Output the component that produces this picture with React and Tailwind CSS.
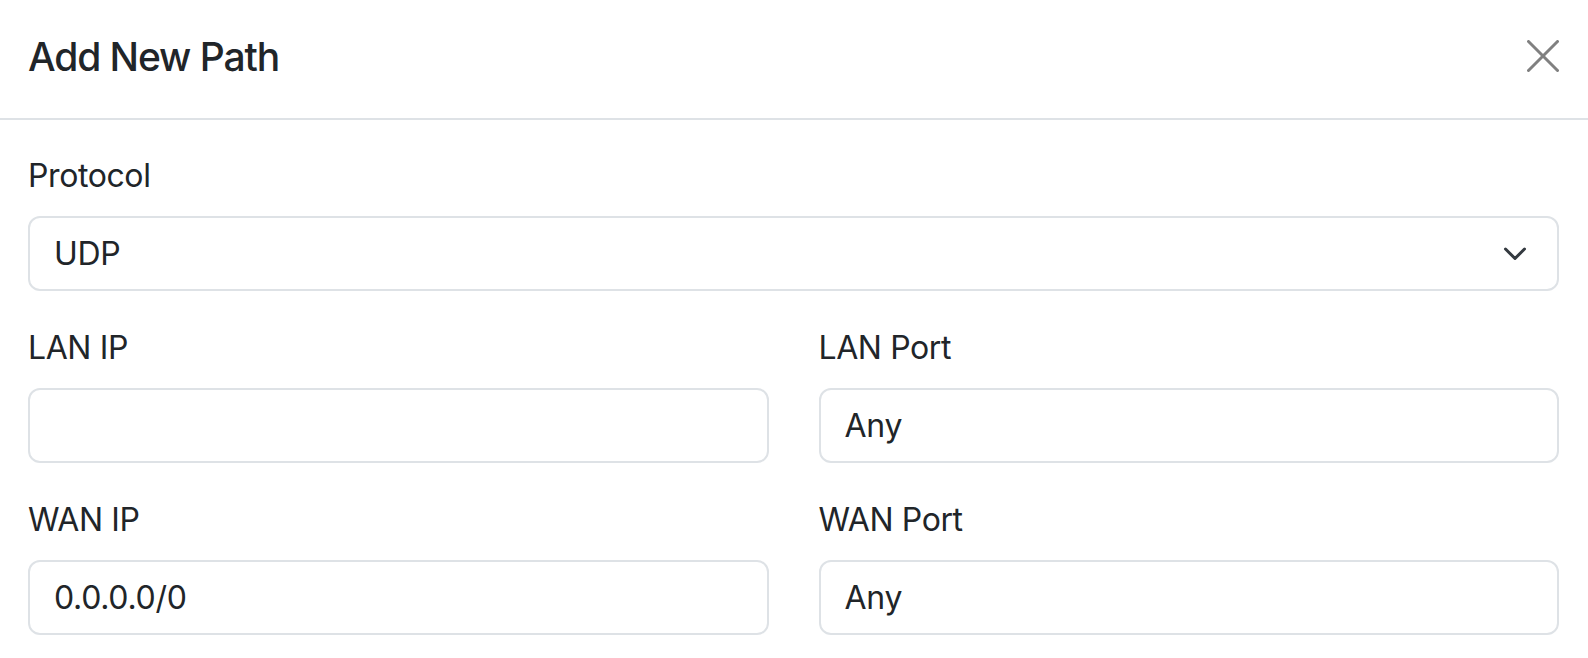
import React from "react";

function Field({ label, value, select }) {
  return (
    <div className="flex flex-col">
      <label className="h-[48px] leading-[48px] mb-[16px] text-[32px] tracking-[-0.4px] text-[#212529]">{label}</label>
      <div className="h-[75px] border-2 border-[#dee2e6] rounded-[12px] pl-[24px] pr-[30px] flex items-center justify-between text-[32px] tracking-[-0.3px] text-[#212529]">
        <span className="leading-[48px]">{value}</span>
        {select && (
          <svg width="24" height="14" viewBox="0 0 24 14" fill="none">
            <polyline points="2.5,2 12,11.5 21.5,2" stroke="#343a40" strokeWidth="3" strokeLinecap="round" strokeLinejoin="round" />
          </svg>
        )}
      </div>
    </div>
  );
}

export default function App() {
  return (
    <div className="w-[1588px] h-[658px] bg-white overflow-hidden" style={{ fontFamily: "Inter, 'Noto Sans', sans-serif" }}>
      <div className="h-[120px] border-b-2 border-[#dee2e6] pl-[28px] pr-[29px] pt-[27px] pb-[31px] flex items-start justify-between">
        <h5 className="text-[39px] leading-[60px] font-medium tracking-[-1.1px] text-[#212529]">Add New Path</h5>
        <button className="w-[32px] h-[32px] mt-[13px] flex items-center justify-center">
          <svg width="32" height="32" viewBox="0 0 32 32" fill="none">
            <line x1="1.5" y1="1.5" x2="30.5" y2="30.5" stroke="#808080" strokeWidth="3" strokeLinecap="round" />
            <line x1="30.5" y1="1.5" x2="1.5" y2="30.5" stroke="#808080" strokeWidth="3" strokeLinecap="round" />
          </svg>
        </button>
      </div>
      <div className="pl-[28px] pr-[29px] pt-[32px] flex flex-col gap-[33px]">
        <Field label="Protocol" value="UDP" select />
        <div className="grid grid-cols-2 gap-x-[50px]">
          <Field label="LAN IP" value="" />
          <Field label="LAN Port" value="Any" />
        </div>
        <div className="grid grid-cols-2 gap-x-[50px]">
          <Field label="WAN IP" value="0.0.0.0/0" />
          <Field label="WAN Port" value="Any" />
        </div>
      </div>
    </div>
  );
}
